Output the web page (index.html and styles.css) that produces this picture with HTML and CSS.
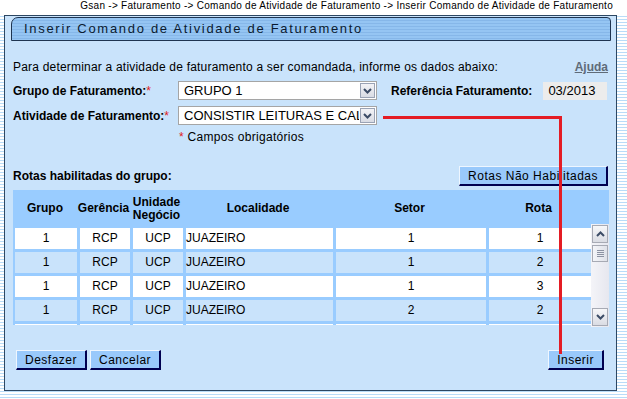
FILE: index.html
```html
<!DOCTYPE html>
<html lang="pt-BR">
<head>
    <meta charset="UTF-8">
    <title>Inserir Comando de Atividade de Faturamento</title>
    <link rel="stylesheet" href="styles.css">
</head>
<body>
    <div class="crumb">Gsan -&gt; Faturamento -&gt; Comando de Atividade de Faturamento -&gt; Inserir Comando de Atividade de Faturamento</div>
    <div class="panel">
        <div class="title-bar">Inserir Comando de Atividade de Faturamento</div>
        <div class="content">
            <div class="intro">
                <span>Para determinar a atividade de faturamento a ser comandada, informe os dados abaixo:</span>
                <a class="help" href="#">Ajuda</a>
            </div>
            <div class="form-row">
                <label class="lbl">Grupo de Faturamento:<span class="req">*</span></label>
                <div class="select"><span class="sel-text">GRUPO 1</span><span class="sel-btn"><svg width="9" height="6" viewBox="0 0 9 6"><path d="M1 1 L4.5 4.5 L8 1" fill="none" stroke="#3c4c66" stroke-width="2"/></svg></span></div>
                <label class="lbl ref-lbl">Referência Faturamento:</label>
                <div class="readonly">03/2013</div>
            </div>
            <div class="form-row">
                <label class="lbl">Atividade de Faturamento:<span class="req">*</span></label>
                <div class="select"><span class="sel-text">CONSISTIR LEITURAS E CAL</span><span class="sel-btn"><svg width="9" height="6" viewBox="0 0 9 6"><path d="M1 1 L4.5 4.5 L8 1" fill="none" stroke="#3c4c66" stroke-width="2"/></svg></span></div>
            </div>
            <div class="note"><span class="req">*</span> Campos obrigatórios</div>

            <div class="routes-bar">
                <span class="lbl">Rotas habilitadas do grupo:</span>
                <button class="btn">Rotas Não Habilitadas</button>
            </div>

            <div class="grid">
                <div class="head">
                    <div>Grupo</div><div>Gerência</div><div>Unidade<br>Negócio</div><div>Localidade</div><div>Setor</div><div>Rota</div>
                </div>
                <div class="grid-body">
                    <div class="rows">
                        <div class="row"><div>1</div><div>RCP</div><div>UCP</div><div class="left">JUAZEIRO</div><div>1</div><div>1</div></div>
                        <div class="row alt"><div>1</div><div>RCP</div><div>UCP</div><div class="left">JUAZEIRO</div><div>1</div><div>2</div></div>
                        <div class="row"><div>1</div><div>RCP</div><div>UCP</div><div class="left">JUAZEIRO</div><div>1</div><div>3</div></div>
                        <div class="row alt"><div>1</div><div>RCP</div><div>UCP</div><div class="left">JUAZEIRO</div><div>2</div><div>2</div></div>
                        <div class="row"><div></div><div></div><div></div><div></div><div></div><div></div></div>
                    </div>
                    <div class="scrollbar">
                        <div class="sb-btn"><svg width="9" height="6" viewBox="0 0 9 6"><path d="M1 5 L4.5 1.5 L8 5" fill="none" stroke="#3c4c66" stroke-width="2"/></svg></div>
                        <div class="sb-thumb"><span></span><span></span><span></span><span></span></div>
                        <div class="sb-track"></div>
                        <div class="sb-btn"><svg width="9" height="6" viewBox="0 0 9 6"><path d="M1 1 L4.5 4.5 L8 1" fill="none" stroke="#3c4c66" stroke-width="2"/></svg></div>
                    </div>
                </div>
            </div>

            <div class="actions">
                <div class="left-actions">
                    <button class="btn">Desfazer</button>
                    <button class="btn">Cancelar</button>
                </div>
                <button class="btn">Inserir</button>
            </div>
        </div>
    </div>

    <!-- marcação em vermelho sobre a tela -->
    <div class="mark mark-h"></div>
    <div class="mark mark-v"></div>
</body>
</html>
```

FILE: styles.css
```css
body {
    margin: 0;
    width: 627px;
    height: 399px;
    overflow: hidden;
    position: relative;
    font-family: "Liberation Sans", Arial, sans-serif;
    font-size: 12px;
    color: #000;
    background: repeating-linear-gradient(#ffffff 0 1px, #b9dcf8 1px 2px, #ffffff 2px 3px);
}

.crumb {
    height: 15px;
    line-height: 11px;
    font-size: 10px;
    text-align: right;
    padding-right: 14px;
    letter-spacing: 0.28px;
    background: #fff;
}

.panel {
    margin-left: 4px;
    width: 611px;
    height: 374px;
    border: 1px solid #2d4762;
    background: #c9e3fb;
}

.title-bar {
    margin: 1px 5px 0 6px;
    height: 22px;
    line-height: 22px;
    padding-left: 12px;
    border: 1px solid #1e3450;
    border-top-left-radius: 7px;
    border-top-right-radius: 4px;
    background: repeating-linear-gradient(#95c5f3 0 2px, #86b7e9 2px 3px);
    font-size: 13px;
    letter-spacing: 1.7px;
    color: #0a1a30;
}

.content {
    padding: 0 8px 0 8px;
}

.intro {
    display: flex;
    justify-content: space-between;
    margin-top: 18px;
    height: 16px;
    line-height: 16px;
    letter-spacing: 0.2px;
}

.help {
    color: #5f6b78;
    font-weight: bold;
    letter-spacing: 0;
}

.form-row {
    display: flex;
    align-items: center;
    margin-top: 6px;
    height: 19px;
}

.lbl {
    font-weight: bold;
    width: 165px;
}

.req {
    color: #e02020;
    font-weight: normal;
}

.select {
    display: flex;
    width: 197px;
    height: 17px;
    border: 1px solid #a5a5a5;
    background: #fff;
}

.sel-text {
    flex: 1;
    overflow: hidden;
    white-space: nowrap;
    font-size: 13px;
    line-height: 17px;
    padding-left: 5px;
}

.sel-btn {
    width: 15px;
    height: 15px;
    margin: 1px;
    border: 1px solid #9aa3b5;
    box-sizing: border-box;
    background: linear-gradient(#f3f3f6, #d9dce4);
    display: flex;
    align-items: center;
    justify-content: center;
}

.ref-lbl {
    width: auto;
    margin-left: 14px;
}

.readonly {
    margin-left: 11px;
    width: 59px;
    height: 18px;
    line-height: 18px;
    padding-left: 5px;
    background: #ececec;
    font-size: 13px;
}

.note {
    margin: 5px 0 0 166px;
    height: 14px;
    line-height: 14px;
    letter-spacing: 0.3px;
}

.routes-bar {
    display: flex;
    justify-content: space-between;
    align-items: center;
    margin-top: 22px;
    height: 20px;
}

.routes-bar .lbl {
    width: auto;
}

.btn {
    font-family: "Liberation Sans", Arial, sans-serif;
    font-size: 12px;
    height: 20px;
    padding: 0 8px;
    background: #99c9fb;
    border: 1px solid;
    border-color: #eef6ff #000050 #000050 #eef6ff;
    border-width: 1px 2px 2px 1px;
    letter-spacing: 0.5px;
    color: #000;
}

.grid {
    margin-top: 4px;
    width: 596px;
}

.head {
    display: grid;
    grid-template-columns: 64px 53px 53px 150px 153px 105px 18px;
    height: 37px;
    background: #99ccff;
    font-weight: bold;
    line-height: 13px;
}

.head div {
    display: flex;
    align-items: center;
    justify-content: center;
    text-align: center;
}

.grid-body {
    display: flex;
    height: 98px;
}

.rows {
    width: 578px;
    height: 97px;
    padding-top: 1px;
    overflow: hidden;
    background: #99ccff;
    display: flex;
    flex-direction: column;
    gap: 3px;
}

.row {
    display: grid;
    grid-template-columns: 62px 50px 50px 147px 150px 102px;
    column-gap: 3px;
    padding-left: 2px;
    flex: 0 0 21px;
}

.row div {
    background: #fff;
    text-align: center;
    line-height: 21px;
}

.row.alt div {
    background: #c9e3fb;
}

.row div.left {
    text-align: left;
}

.scrollbar {
    width: 18px;
    margin-top: -3px;
    height: 103px;
    display: flex;
    flex-direction: column;
    background: linear-gradient(90deg, #f4f4f8, #e6e7ef);
}

.sb-btn {
    height: 16px;
    margin: 1px;
    border: 1px solid #a7aab4;
    background: linear-gradient(#f7f7f9, #dadce3);
    display: flex;
    align-items: center;
    justify-content: center;
}

.sb-thumb {
    height: 15px;
    margin: 1px;
    border: 1px solid #a7aab4;
    background: linear-gradient(90deg, #f4f5f9, #dfe1e8);
    display: flex;
    flex-direction: column;
    justify-content: center;
    align-items: center;
    gap: 1px;
}

.sb-thumb span {
    width: 7px;
    height: 1px;
    background: #8c92a2;
}

.sb-track {
    flex: 1;
}

.actions {
    display: flex;
    justify-content: space-between;
    margin: 25px 4px 0 3px;
}

.left-actions {
    display: flex;
    gap: 3px;
}

.mark {
    position: absolute;
    background: #e41c24;
}

.mark-h {
    left: 383px;
    top: 116px;
    width: 179px;
    height: 3px;
}

.mark-v {
    left: 559px;
    top: 116px;
    width: 3px;
    height: 238px;
}
```
